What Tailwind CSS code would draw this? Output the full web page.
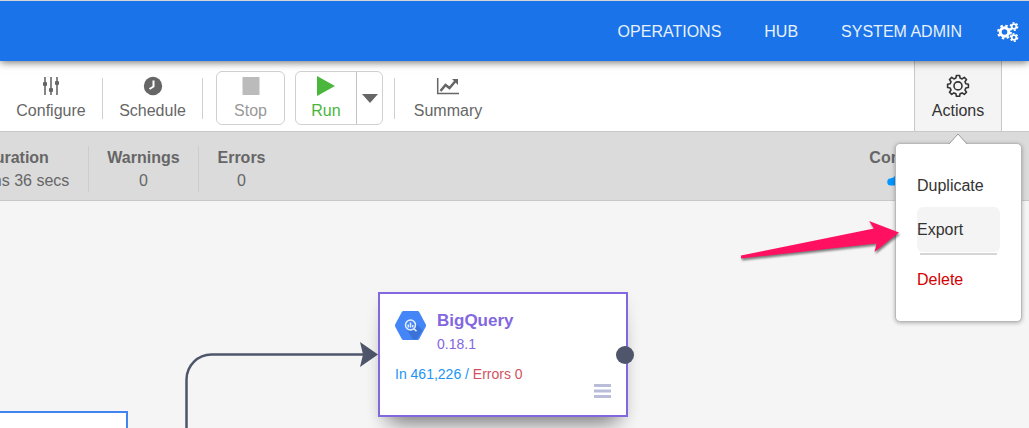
<!DOCTYPE html>
<html lang="en">
<head>
<meta charset="utf-8">
<meta name="viewport" content="width=device-width, initial-scale=1">
<title>Pipeline</title>
<script src="https://cdn.jsdelivr.net/npm/@tailwindcss/browser@4"></script>
</head>
<body class="flex min-h-screen flex-col overflow-hidden bg-[#f5f5f5] font-['Liberation_Sans',Arial,sans-serif] text-base leading-6 text-[#666]">

<header class="relative z-10 flex h-[61px] shrink-0 items-center justify-end border-t border-[#d5d5d5] bg-[#1a73e8] pt-0.5 text-[#e8f1fd] shadow-[0_1px_8px_rgba(0,0,0,0.6)]">
  <nav class="flex items-center gap-[43px] pr-2.5">
    <a href="#">OPERATIONS</a>
    <a href="#">HUB</a>
    <a href="#">SYSTEM ADMIN</a>
    <button aria-label="Settings" class="-ml-2 text-white">
      <svg width="22" height="20" viewBox="0 0 22 20" fill="none" stroke="currentColor">
        <circle cx="7.500" cy="10" r="4.300" stroke-width="3"/>
        <circle cx="7.500" cy="10" r="6.400" stroke-width="2" stroke-dasharray="2.500 2.526"/>
        <circle cx="17" cy="4.500" r="2.300" stroke-width="1.800"/>
        <circle cx="17" cy="4.500" r="3.700" stroke-width="1.400" stroke-dasharray="1.900 1.975"/>
        <circle cx="17" cy="15.500" r="2.300" stroke-width="1.800"/>
        <circle cx="17" cy="15.500" r="3.700" stroke-width="1.400" stroke-dasharray="1.900 1.975"/>
      </svg>
    </button>
  </nav>
</header>

<div class="relative z-[5] flex h-[71px] shrink-0 items-center border-b border-[#c8c8c8] bg-white pt-1">
  <button class="flex w-[102px] flex-col items-center gap-0.5">
    <svg width="18" height="24" viewBox="0 0 18 24" fill="#666"><path d="M2 4h2v18H2zM8 4h2v18H8zM14 4h2v18h-2z" opacity=".8"/><rect x="1" y="9" width="4" height="4" rx="1"/><rect x="7" y="15" width="4" height="4" rx="1"/><rect x="13" y="8" width="4" height="4" rx="1"/></svg>
    Configure
  </button>
  <div class="h-[41px] w-px bg-[#d0d0d0]"></div>
  <button class="flex w-[99px] flex-col items-center gap-0.5">
    <svg width="20" height="24" viewBox="0 0 20 24"><circle cx="10" cy="13" r="9.200" fill="#666"/><path d="M10.500 7.500v6L6.500 16" fill="none" stroke="#fff" stroke-width="2"/></svg>
    Schedule
  </button>
  <div class="h-[41px] w-px bg-[#d0d0d0]"></div>
  <button class="ml-[13px] flex h-[54px] w-[69px] flex-col items-center justify-center gap-0.5 rounded-md border border-[#d0d0d0] text-[#999]">
    <svg width="18" height="24" viewBox="0 0 18 24"><path d="M.5 4h17v18H.5z" fill="#bbb"/></svg>
    Stop
  </button>
  <div class="ml-2.5 flex h-[54px] w-[88px] rounded-md border border-[#d0d0d0]">
    <button class="flex flex-1 flex-col items-center justify-center gap-0.5 text-[#4ab63c]">
      <svg width="18" height="24" viewBox="0 0 18 24"><path d="M0 3l18 10L0 23z" fill="#4ab63c"/></svg>
      Run
    </button>
    <button aria-label="Run options" class="flex w-[26px] items-center justify-center border-l border-[#c4c4c4]">
      <svg width="16" height="9" viewBox="0 0 16 9"><path d="M0 0h16L8 9z" fill="#666"/></svg>
    </button>
  </div>
  <div class="ml-[11px] h-[41px] w-px bg-[#d0d0d0]"></div>
  <button class="flex w-[106px] flex-col items-center gap-0.5">
    <svg width="24" height="24" viewBox="0 0 24 24" fill="none" stroke="#666"><path d="M1.700 5v15.500H23" stroke-width="1.500"/><path d="M4.500 18l5-6 4 3 6-7" stroke-width="2.500"/><path d="M16 6h6v6z" fill="#666" stroke="none"/></svg>
    Summary
  </button>

  <div class="relative -mt-1 mr-[27px] ml-auto flex w-[88px] items-center self-stretch border-x border-[#c8c8c8] bg-[#f4f4f4] pt-1 text-[#333]">
    <button aria-haspopup="menu" aria-expanded="true" class="flex w-full flex-col items-center gap-0.5">
      <svg width="24" height="24" viewBox="0 0 24 24" fill="none" stroke="#333" stroke-width="1.600" stroke-linejoin="round"><path d="M10.400 2.500h3.200l.5 2.600 2 .8 2.200-1.500 2.200 2.200-1.500 2.200.8 2 2.600.5v3.200l-2.600.5-.8 2 1.500 2.200-2.200 2.200-2.200-1.500-2 .8-.5 2.600h-3.200l-.5-2.600-2-.8-2.200 1.500-2.200-2.200L5 17l-.8-2-2.600-.5v-3.200l2.600-.5.8-2-1.500-2.200 2.200-2.200 2.200 1.500 2-.8z"/><circle cx="12" cy="12.900" r="4"/></svg>
      Actions
    </button>
    <div class="absolute top-[82px] -left-5 w-[127px] rounded-[5px] border border-[#b8b8b8] bg-white py-5 pr-[21px] pl-[21px] shadow-[0_1px_4px_rgba(0,0,0,0.3)]">
      <svg class="absolute -top-[11px] left-[52px]" width="20" height="12" viewBox="0 0 20 12"><path d="M1 11L10 1l9 10v1H1z" fill="#fff"/><path d="M1 11L10 1l9 10" fill="none" stroke="#999"/></svg>
      <ul role="menu">
        <li><button role="menuitem" class="h-[43px] w-full text-left">Duplicate</button></li>
        <li><button role="menuitem" class="h-[45px] w-full rounded-md bg-[#f4f4f4] text-left">Export</button></li>
        <li role="separator" class="mx-[3px] mt-px mb-[3px] h-0.5 bg-[#d6d6d6]"></li>
        <li><button role="menuitem" class="h-[43px] w-full text-left text-[#d40001]">Delete</button></li>
      </ul>
    </div>
  </div>
</div>

<dl class="flex h-[69px] shrink-0 items-center border-b border-[#c8c8c8] bg-[#dbdbdb] pt-1.5 text-center leading-[23px]">
  <div class="-ml-14 w-36"><dt class="font-bold">Duration</dt><dd>7 mins 36 secs</dd></div>
  <div class="w-[110px] border-l border-[#cdcdcd]"><dt class="font-bold">Warnings</dt><dd>0</dd></div>
  <div class="w-[86px] border-l border-[#cdcdcd]"><dt class="font-bold">Errors</dt><dd>0</dd></div>
  <div class="mr-[37px] ml-auto"><dt class="font-bold">Compute profile</dt>
    <dd class="flex items-center justify-center gap-1"><svg width="18" height="12" viewBox="0 0 18 12"><path d="M4 10.500a3.500 3.500 0 0 1-.5-7Q4.500 2.500 6 3a4.300 4.300 0 0 1 8 1.500 3 3 0 0 1 0 6z" fill="#0296ff"/></svg>Dataproc</dd></div>
</dl>

<main class="relative flex-1 overflow-hidden">
  <svg class="absolute top-0 left-0" width="400" height="227" viewBox="0 201 400 227" fill="none"><path d="M186.500 428V379.500a25 25 0 0 1 25-25H366" stroke="#4f566b" stroke-width="2.500"/><path d="M360 342l18 12.500L360 367l3-12.500z" fill="#4f566b"/></svg>

  <div class="absolute top-[210px] left-0 h-32 w-32 border-t-2 border-r-2 border-[#4284f0] bg-white"></div>

  <article class="absolute top-[91px] left-[378px] flex h-[125px] w-[250px] flex-col border-2 border-[#8367df] bg-white pt-[15px] pl-[15px] text-sm shadow-[0_18px_20px_-12px_rgba(0,0,0,0.45),0_6px_14px_-2px_rgba(0,0,0,0.10)]">
    <div class="flex gap-[11px]">
      <svg class="mt-0.5" width="31" height="29" viewBox="0 0 31 29"><path d="M8.500 0h14a2 2 0 0 1 1.700 1l6.400 12a3 3 0 0 1 0 3l-6.400 12a2 2 0 0 1-1.700 1h-14a2 2 0 0 1-1.700-1L.4 16a3 3 0 0 1 0-3L6.800 1a2 2 0 0 1 1.700-1z" fill="#4486f8"/><path d="M19.500 11l8 8-5.500 9.500h-4L12 19z" fill="#3a72d8"/><circle cx="15.500" cy="14" r="5" fill="#4486f8" stroke="#e8effc" stroke-width="1.500"/><path d="M13.300 13.500v3M15.500 11.500v5M17.700 14v2.200M19 17.800l2.500 2.500" stroke="#e8effc" stroke-width="1.500"/></svg>
      <div class="text-[#8367df]"><h2 class="text-[17px] leading-[23px] font-bold">BigQuery</h2><p class="leading-6">0.18.1</p></div>
    </div>
    <p class="mt-2 leading-5 text-[#1a94f5]">In 461,226 / <span class="text-[#d2525f]">Errors 0</span></p>
    <button aria-label="Menu" class="mr-[15px] self-end"><svg width="17" height="14" viewBox="0 0 17 14"><path d="M0 0h17v3H0zM0 5.500h17v3H0zM0 11h17v3H0z" fill="#babdd9"/></svg></button>
    <span class="absolute top-[52px] -right-2 size-[18px] rounded-full bg-[#4f566b]"></span>
  </article>
</main>

<svg class="pointer-events-none absolute top-[215px] left-[735px] z-20 drop-shadow-[1px_2px_1px_rgba(0,0,0,0.5)]" width="170" height="50" viewBox="735 215 170 50"><path d="M741 255.500L874 228.500 869 221l30 11.500L874.500 252l2-8.500L741 258.500z" fill="#ff1060"/></svg>
</body>
</html>
